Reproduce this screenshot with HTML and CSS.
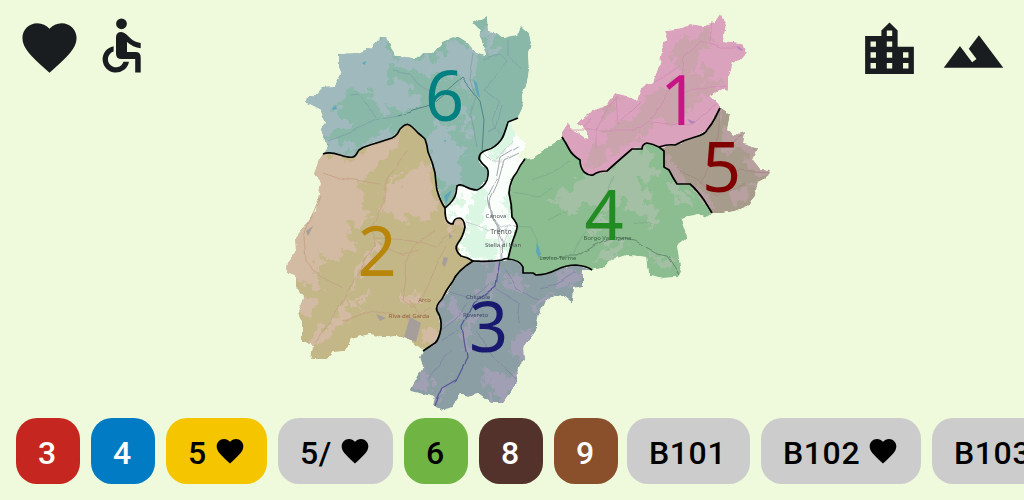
FILE: index.html
```html
<!DOCTYPE html>
<html lang="en">
<head>
<meta charset="utf-8">
<title>Lines and areas</title>
<link rel="stylesheet" href="styles.css">
</head>
<body>
<main class="stage">
  <div class="tools tools-left">
    <svg class="icon" viewBox="0 0 24 24"><path d="M12 21.35l-1.45-1.32C5.4 15.36 2 12.28 2 8.5 2 5.42 4.42 3 7.5 3c1.74 0 3.41.81 4.5 2.09C13.09 3.81 14.76 3 16.5 3 19.58 3 22 5.42 22 8.5c0 3.78-3.4 6.86-8.55 11.54L12 21.35z"/></svg>
    <svg class="icon icon-access" viewBox="90 15 65 65"><circle cx="121.5" cy="23.8" r="5.4"/><path d="M116 37.5Q116 32 121.3 32Q124 32 126.5 34.6C130.500 39 135 42.400 140.700 43V48.200C135.500 47.700 130.800 45.500 127 42V52H135.500Q140.700 52 140.700 57.300V72.500H135.200V59H121.500Q116 59 116 53.500Z"/><path d="M113.600 46.200V51.600A8 8 0 1 0 123.500 61.700H129A13.300 13.300 0 1 1 113.600 46.200Z"/></svg>
  </div>
  <svg class="map" viewBox="270 0 510 418">
    <defs>
      <filter id="edge" x="-5%" y="-5%" width="110%" height="110%">
        <feTurbulence type="fractalNoise" baseFrequency=".14" numOctaves="2" seed="4"/>
        <feDisplacementMap in="SourceGraphic" scale="4" xChannelSelector="R" yChannelSelector="G"/>
      </filter>
      <filter id="rough" x="-10%" y="-10%" width="120%" height="120%">
        <feTurbulence type="fractalNoise" baseFrequency=".09" numOctaves="4" seed="8"/>
        <feDisplacementMap in="SourceGraphic" scale="26" xChannelSelector="R" yChannelSelector="G"/>
      </filter>
      <filter id="bend" x="-10%" y="-10%" width="120%" height="120%">
        <feTurbulence type="fractalNoise" baseFrequency=".06" numOctaves="1" seed="3"/>
        <feDisplacementMap in="SourceGraphic" scale="6" xChannelSelector="R" yChannelSelector="G"/>
      </filter>
      <path id="a6" d="M323 154L333 153 348 157 355 157 359 150 370 145 392 138 400 128 406 124 413 126 420 135 425 138 428 150 430 160 435 173 437 190 445 208 455 197 457 186 477 190 486 182 488 170 479 162 482 153 497 145 503 138 508 122 518 117 523 107 522 95 527 83 529 70 528 53 531 43 529 33 521 26 517 35 510 36 503 38 497 33 489 31 488 16 482 18 473 23 479 29 482 42 486 56 475 53 467 43 459 38 453 37 442 42 433 53 423 53 417 59 400 56 395 56 391 46 386 37 380 37 370 48 358 53 339 54 339 67 342 74 335 86 322 87 313 97 307 97 306 102 320 109 326 123 320 130 325 138 328 148Z"/>
      <path id="a2" d="M323 154L319 160 314 174 321 183 316 210 305 226 295 238 296 250 287 262 286 272 296 275 296 288 303 297 298 313 302 322 302 341 313 345 311 359 327 359 333 352 346 351 351 339 370 334 383 338 394 336 405 338 416 345 423 350 435 343 441 325 436 308 447 293 455 278 463 267 473 261 459 254 458 245 465 230 463 218 456 218 453 224 447 222 445 208 437 190 435 173 430 160 428 150 425 138 420 135 413 126 406 124 400 128 392 138 370 145 359 150 355 157 348 157 333 153Z"/>
      <path id="a3" d="M423 351L435 343 441 325 436 308 447 293 455 278 463 267 473 261 502 260 508 259 515 260 523 267 523 273 533 273 536 275 550 273 567 266 575 265 592 270 583 270 583 286 574 288 573 303 562 295 553 297 545 301 538 317 537 328 523 347 524 361 518 367 517 383 503 402 490 402 478 393 468 396 461 394 452 407 442 411 433 405 435 397 410 391 423 367 420 357Z"/>
      <path id="a4" d="M525 159L511 180 509 193 512 217 517 225 508 259 515 260 523 267 523 273 536 275 550 273 567 266 575 265 592 270 603 268 612 259 628 255 647 257 649 275 663 278 678 277 681 272 679 258 677 245 687 237 681 219 698 214 707 217 712 213 690 185 677 184 669 170 664 167 664 151 659 147 647 143 642 148 632 149 607 171 590 175 584 172 580 160 573 155 562 137 550 145 533 158Z"/>
      <path id="a1" d="M562 137L573 155 580 160 584 172 590 175 607 171 632 149 642 148 647 143 659 147 675 145 695 137 707 130 720 108 718 102 709 96 723 88 728 91 728 77 732 62 741 60 747 53 743 43 723 41 726 25 721 14 715 23 703 26 690 24 682 28 665 30 668 40 663 42 660 63 653 82 642 87 638 101 627 96 615 93 607 105 590 112 577 124 583 127 587 132 587 139 578 133 570 128 568 123 562 132Z"/>
      <path id="a5" d="M720 108L730 115 727 130 732 136 745 132 743 143 758 148 753 160 760 169 770 170 768 177 758 182 755 195 750 205 736 211 723 213 712 213 690 185 677 184 669 170 664 167 664 151 659 147 675 145 695 137 707 130Z"/>
      <path id="a0" d="M445 208L455 197 457 186 477 190 486 182 488 170 479 162 482 153 497 145 503 138 508 122 518 117 512 123 513 132 525 143 524 150 517 157 525 159 511 180 509 193 512 217 517 225 508 259 502 260 473 261 459 254 458 245 465 230 463 218 456 218 453 224 447 222Z"/>
      <clipPath id="c6"><use href="#a6"/></clipPath>
      <clipPath id="c2"><use href="#a2"/></clipPath>
      <clipPath id="c3"><use href="#a3"/></clipPath>
      <clipPath id="c4"><use href="#a4"/></clipPath>
      <clipPath id="c1"><use href="#a1"/></clipPath>
      <clipPath id="c5"><use href="#a5"/></clipPath>
      <clipPath id="c0"><use href="#a0"/></clipPath>
    </defs>

    <g filter="url(#edge)">
      <g class="ground0" clip-path="url(#c0)">
        <use href="#a0"/>
        <g class="patch" filter="url(#rough)">
          <path d="M480 150L512 120 518 142 494 158ZM478 182L488 192 482 226 466 224 472 200ZM452 196L464 190 460 202 448 217ZM462 230L478 224 492 240 494 260 466 256ZM504 174L510 200 510 222 502 204ZM506 232L514 240 508 260 502 250Z"/>
        </g>
      </g>
      <g class="ground6" clip-path="url(#c6)">
        <use href="#a6"/>
        <g class="patch" filter="url(#rough)">
          <path d="M300 80L342 50 380 32 392 54 384 90 350 92 330 108 352 126 322 134 300 112ZM390 52L440 62 450 36 466 44 478 60 460 76 430 74 392 68 382 60ZM372 84L404 82 420 98 408 110 384 112 370 100ZM322 138L358 146 396 126 384 144 330 160ZM426 128L446 120 466 156 460 178 444 194 428 156ZM462 66L476 64 472 90 458 94ZM462 104L470 112 468 140 460 120ZM484 26L494 34 496 50 488 54Z"/>
        </g>
      </g>
      <g class="ground2" clip-path="url(#c2)">
        <use href="#a2"/>
        <g class="patch" filter="url(#rough)">
          <path d="M322 154L352 160 400 130 396 148 376 166 360 184 352 200 320 190 310 162ZM316 188L358 188 368 214 346 230 356 242 334 264 318 252 322 290 300 282 280 270 294 234ZM402 180L424 158 434 196 440 208 420 222 398 216 388 200ZM380 196L396 172 400 204 384 218ZM298 290L316 300 312 318 296 314ZM368 250L382 236 376 258 358 282 346 290 356 268ZM338 312L348 300 346 320 318 344 306 346ZM352 302L372 288 362 310ZM402 292L424 290 420 308 400 306ZM440 222L460 216 464 224 452 232ZM424 330L438 326 434 342 424 346Z"/>
        </g>
      </g>
      <g class="ground3" clip-path="url(#c3)">
        <use href="#a3"/>
        <g class="patch" filter="url(#rough)">
          <path d="M512 272L528 280 518 294 502 288ZM554 272L584 268 582 284 560 286ZM524 330L534 330 522 360 508 352 512 342ZM478 372L518 376 512 396 490 402 494 388ZM412 388L426 366 432 376 424 392ZM492 260L502 260 492 294 480 296ZM446 302L454 290 460 310 448 330ZM468 314L476 316 468 344 458 358ZM430 394L452 380 446 388 438 404ZM542 298L548 296 536 316 530 312Z"/>
        </g>
      </g>
      <g class="ground4" clip-path="url(#c4)">
        <use href="#a4"/>
        <g class="patch" filter="url(#rough)">
          <path d="M582 176L606 170 634 148 650 150 654 176 640 184 650 210 634 214 622 196 604 208 584 204 570 216 550 204 566 190ZM640 212L654 202 662 222 650 228ZM668 180L684 188 694 206 678 204ZM588 226L610 214 604 226 586 240ZM616 240L630 244 614 256 592 262ZM650 254L668 260 676 274 660 266Z"/>
        </g>
      </g>
      <g class="ground1" clip-path="url(#c1)">
        <use href="#a1"/>
        <g class="patch" filter="url(#rough)">
          <path d="M676 38L706 32 718 42 700 46 690 66 694 78 708 66 716 74 700 90 722 76 726 84 704 96 690 108 676 126 652 120 642 138 614 150 600 168 586 170 590 150 604 146 606 126 634 116 648 94 662 92 680 76 672 58ZM598 112L622 96 616 108 600 120Z"/>
        </g>
      </g>
      <g class="ground5" clip-path="url(#c5)">
        <use href="#a5"/>
        <g class="patch" filter="url(#rough)">
          <path d="M726 122L748 130 764 152 772 176 754 176 748 156 734 146 728 160 720 140ZM662 154L676 164 684 180 708 196 716 212 694 192 668 176ZM714 112L724 108 720 126ZM734 186L752 184 746 206 728 204Z"/>
        </g>
      </g>
    </g>

    <g class="roads" filter="url(#bend)">
      <g class="road6">
        <path class="main" d="M398 116L430 106 446 92 462 78 480 101 484 120 482 152"/>
        <path d="M328 141L350 133 370 121 398 116M376 118L366 104 358 95 350 96M392 70L408 73 418 84 430 92M474 52L470 80 476 96 470 116 476 148M484 60L500 54 508 62 494 78 484 90 500 102 492 120 500 134M508 40L508 54 520 68M488 132L496 128 502 106"/>
      </g>
      <g class="road2">
        <path d="M406 152L396 168 384 186 384 204 372 228 374 246 348 292 336 312 314 342M374 238L412 240 436 246 456 228M320 196L304 236 306 260 320 276 342 288M436 230L414 244 404 262 406 280 402 300 412 308 420 302 432 276 446 246M342 322L372 310 408 318 412 330M376 242L402 254 420 250M324 172L340 178 380 184M408 300L420 316 430 308"/>
      </g>
      <g class="road3">
        <path class="main" d="M500 260L496 286 474 303 462 326 467 358 456 380 442 388 434 405"/>
        <path d="M448 292L472 298 490 284M440 330L456 318 466 304M496 288L520 304 518 322M476 330L492 356 508 370 516 378M442 340L458 330M506 268L516 290 538 300M540 288L556 284 576 272M428 378L452 350"/>
      </g>
      <g class="road4">
        <path class="main" d="M542 258L562 256 578 256 594 246 614 236 634 240 658 254 668 256 680 274"/>
        <path d="M514 225L530 226 537 240 540 260M532 180L552 174 570 160M512 192L538 196 552 188M574 256L582 236 598 222M606 194L614 176M634 222L652 224M548 220L568 210"/>
      </g>
      <g class="road1">
        <path d="M570 130L596 130 634 130 654 116 666 96 682 78 684 58 702 40 720 48 742 48M712 20L710 42M596 148L596 130 606 110 620 94M654 82L680 66M680 92L726 86M650 122L690 126 716 104M616 96L618 124 640 102M584 128L592 118"/>
      </g>
      <g class="road5"><path d="M720 112L718 138 714 160 700 184M678 168L698 180 716 196 744 184M736 170L770 172M726 144L742 136"/></g>
      <g class="road0">
        <path class="rail" d="M518 153L504 160 498 182 490 200 494 222 502 240 503 260M520 146L500 158 496 180 488 196 492 216 500 232"/>
        <path d="M482 152L492 162 504 162M508 226L498 234 502 260M512 224L500 228 492 220M466 222L490 230M508 230L500 248M514 140L496 160"/>
      </g>
    </g>
    <g class="lakes">
      <path d="M473 79L477 83 480 98 477 95ZM452 190L446 203 444 196 449 192ZM537 242L541 254 539 258 536 252ZM362 63L366 61 365 65ZM332 108L336 106 337 109 333 110ZM443 141L446 140 446 142Z"/>
      <path class="grey" d="M410 317L421 323 416 342 404 337ZM376 314L386 318 380 321ZM444 257L448 258 445 267 442 264ZM449 234L453 236 449 239ZM306 231L313 226 308 236Z"/>
      <path class="violet" d="M737 46L742 49 743 51 738 49ZM687 119L696 122 691 124Z"/>
    </g>

    <g class="borders">
      <path d="M323 154C328 152 334 153 340 155S349 158 353 157S357 152 359 150Q363 147 370 145T392 138Q397 136 400 129Q405 124 408 124.500T418 133Q422 136 425 139Q427 144 428 152Q433 163 435 173Q436 184 437 190Q440 201 445 208"/>
      <path d="M445 208Q455 200 456 193T457 186C463 182 466 190 477 190Q484 187 487 180Q490 170 486 167T479 159Q479 152 487 150T501 140Q504 136 508 122L518 118"/>
      <path d="M445 208Q445 218 447 221T453 224Q454 218 459 218T465 227Q463 237 458 243T461 256Q467 257 473 261Q457 271 453 281Q446 290 442 299Q435 306 437 311Q442 318 441 328Q439 340 435 343L423 351"/>
      <path d="M473 261Q490 262 502 260Q506 258 508 259Q520 260 523 267V273L533 273 536 275Q546 275 556 270T576 265Q587 266 592 270M508 259Q510 250 513 240Q518 228 517 225T512 217Q512 205 509 193Q510 180 517 172Q520 165 525 159"/>
      <path d="M562 137Q566 143 569 149T580 160Q580 167 584 172Q589 176 593 175Q598 171 607 171Q618 161 632 149H642Q642 144 647 143Q653 144 659 147Q668 144 675 145Q684 140 695 137T707 130Q712 124 715 118L720 108M659 147L664 151 664 167 669 170Q673 178 677 184H690Q697 190 704 200L712 213"/>
    </g>

    <g class="towns">
      <text x="496" y="217.500">Canova</text>
      <text x="501" y="234" class="city">Trento</text>
      <text x="503" y="247">Stella di Man</text>
      <text x="558" y="259.500" class="town4">Levico Terme</text>
      <text x="607.500" y="239.500" class="town4">Borgo Valsugana</text>
      <text x="424.500" y="301.500" class="town2">Arco</text>
      <text x="409" y="317.500" class="town2">Riva del Garda</text>
      <text x="478" y="298.500" class="town3">Chiusole</text>
      <text x="475.500" y="316.500" class="town3">Rovereto</text>
    </g>
    <g class="numbers">
      <text class="n1" x="679.500" y="125">1</text>
      <text class="n2" x="377" y="276">2</text>
      <text class="n3" x="488.500" y="351.500">3</text>
      <text class="n4" x="604" y="240">4</text>
      <text class="n5" x="721.500" y="192">5</text>
      <text class="n6" x="444.500" y="120.500">6</text>
    </g>
  </svg>
  <div class="tools tools-right">
    <svg class="icon" viewBox="0 0 24 24"><path d="M15 11V5l-3-3-3 3v2H3v14h18V11h-6zm-8 8H5v-2h2v2zm0-4H5v-2h2v2zm0-4H5V9h2v2zm6 8h-2v-2h2v2zm0-4h-2v-2h2v2zm0-4h-2V9h2v2zm0-4h-2V5h2v2zm6 12h-2v-2h2v2zm0-4h-2v-2h2v2z"/></svg>
    <svg class="icon" viewBox="0 0 24 24"><path d="M14 6.700l-3.750 5 2.850 3.800-1.600 1.200C9.810 14.450 7 10.700 7 10.700l-6 8h22z"/></svg>
  </div>
</main>
<nav class="lines">
  <button class="line red">3</button>
  <button class="line blue">4</button>
  <button class="line yellow w-101">5<svg class="heart" viewBox="0 0 24 24"><path d="M12 21.350l-1.450-1.320C5.400 15.360 2 12.280 2 8.500 2 5.420 4.420 3 7.500 3c1.740 0 3.410.81 4.500 2.090C13.090 3.810 14.760 3 16.500 3 19.580 3 22 5.420 22 8.500c0 3.780-3.400 6.860-8.550 11.540z"/></svg></button>
  <button class="line w-115">5/<svg class="heart" viewBox="0 0 24 24"><path d="M12 21.350l-1.450-1.320C5.400 15.360 2 12.280 2 8.500 2 5.420 4.420 3 7.500 3c1.740 0 3.410.81 4.500 2.090C13.090 3.810 14.760 3 16.500 3 19.580 3 22 5.420 22 8.500c0 3.780-3.400 6.860-8.550 11.540z"/></svg></button>
  <button class="line green">6</button>
  <button class="line dark">8</button>
  <button class="line brown">9</button>
  <button class="line w-123">B101</button>
  <button class="line w-160">B102<svg class="heart" viewBox="0 0 24 24"><path d="M12 21.350l-1.450-1.320C5.400 15.360 2 12.280 2 8.500 2 5.420 4.420 3 7.500 3c1.740 0 3.410.81 4.500 2.090C13.090 3.810 14.760 3 16.500 3 19.580 3 22 5.420 22 8.500c0 3.780-3.400 6.860-8.550 11.540z"/></svg></button>
  <button class="line w-123">B103</button>
</nav>
</body>
</html>
```
FILE: styles.css
```css
* { box-sizing: border-box; }
body { margin: 0; width: 1024px; height: 500px; overflow: hidden; background: #effadc; font-family: Roboto, sans-serif; }
.stage { display: grid; grid-template-columns: 270px 510px 244px; height: 418px; }
.map { width: 510px; height: 418px; display: block; }
.tools { display: flex; align-items: flex-start; }
.tools-left { padding: 15px 0 0 17px; gap: 8px; }
.tools-right { padding: 17px 18px 0 0; gap: 19px; justify-content: flex-end; }
.icon { width: 65px; height: 65px; flex: none; fill: #191d20; }
.lines { display: flex; gap: 11px; padding: 0 16px; }
.line { display: flex; align-items: center; flex: none; width: 64px; height: 66px; margin: 0; padding: 3px 0 0 22px; border: 0; border-radius: 21px; background: #ccc; color: #000; font: 500 32px/1 Roboto, sans-serif; letter-spacing: .6px; }
.line.w-101 { width: 101px; }
.line.w-115 { width: 115px; }
.line.w-123 { width: 123px; }
.line.brown + .line { margin-left: -2px; }
.line.w-160 { width: 160px; }
.line.red { background: #c52720; color: #fff; }
.line.blue { background: #007bc4; color: #fff; }
.line.yellow { background: #f5c500; }
.line.green { background: #70b444; }
.line.dark { background: #52322b; color: #fff; }
.line.brown { background: #8a4f2b; color: #fff; }
.heart { width: 32px; height: 32px; margin: -4px 0 0 6.8px; flex: none; }

.ground0 { fill: #fbfffc; } .ground0 .patch { fill: #dbf6e3; }
.ground1 { fill: #dba2bd; } .ground1 .patch { fill: #cba3ad; }
.ground2 { fill: #c3b687; } .ground2 .patch { fill: #d3baa2; }
.ground3 { fill: #8b9ea4; } .ground3 .patch { fill: #a09fb4; }
.ground4 { fill: #8bbd90; } .ground4 .patch { fill: #a3bfa4; }
.ground5 { fill: #a79c8b; } .ground5 .patch { fill: #b7a09f; }
.ground6 { fill: #89b7a8; } .ground6 .patch { fill: #a0b9bc; }

.roads { fill: none; stroke-width: .8; stroke-linejoin: round; }
.road0 { stroke: #c3c6cb; } .road0 .rail { stroke: #8b8d93; }
.road1 { stroke: #cf8bae; }
.road2 { stroke: #c29f83; }
.road3 { stroke: #7d82a3; } .road3 .main { stroke: #56589a; stroke-width: 1.3; }
.road4 { stroke: #7fab88; } .road4 .main { stroke: #65896c; stroke-width: 1; }
.road5 { stroke: #a58485; }
.road6 { stroke: #7b9fa5; } .road6 .main { stroke: #4f8589; stroke-width: 1; }
.lakes { fill: #5fa6b8; }
.lakes .grey { fill: #a69e9b; }
.lakes .violet { fill: #b385bf; }
.borders { fill: none; stroke: #000; stroke-width: 1.7; stroke-linejoin: round; }
.towns { font: 6px "Noto Sans", sans-serif; text-anchor: middle; fill: #505358; }
.towns .city { font-size: 7px; }
.towns .town2 { fill: #96603c; }
.towns .town3 { fill: #42476d; }
.towns .town4 { fill: #3f6646; }
.numbers { font: 68.5px "Noto Sans", sans-serif; text-anchor: middle; }
.n1 { fill: #c71585; }
.n2 { fill: #b8860b; }
.n3 { fill: #191970; }
.n4 { fill: #228b22; }
.n5 { fill: #800000; }
.n6 { fill: #008080; }
```
